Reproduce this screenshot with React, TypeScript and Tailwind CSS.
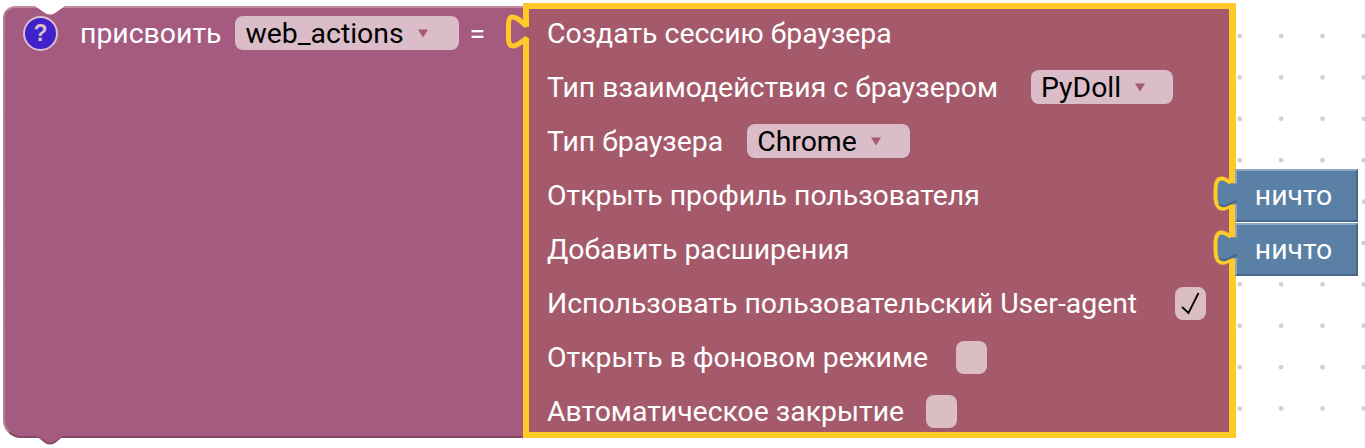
const font = "font-['Roboto',sans-serif]";

function Dropdown({ label, className }: { label: string; className: string }) {
  return (
    <div
      className={`flex h-[34px] items-center rounded-[8px] bg-[#dbbdc9] pl-[10px] text-[28.4px] text-black ${className}`}
    >
      <span className="pt-[2px]">{label}</span>
      <span className="ml-[13px] text-[#a55b6b]">
        <svg width="12" height="9" viewBox="0 0 12 9" className="block">
          <path d="M1 0.5h10L6 8.5z" fill="currentColor" />
        </svg>
      </span>
    </div>
  );
}

function Checkbox({ checked }: { checked?: boolean }) {
  return (
    <div className="flex h-[33px] w-[31px] items-center justify-center rounded-[8px] bg-[#dbbdc4]">
      {checked && (
        <svg width="20" height="24" viewBox="0 0 20 24">
          <path d="M1 16 7.5 22 17.5 2" fill="none" stroke="#000" strokeWidth="1.8" />
        </svg>
      )}
    </div>
  );
}

function Nothing() {
  return (
    <div className="relative -mr-[129px] flex h-[53px] w-[123px] items-center justify-center border-2 border-r-[#47678a] border-b-[#47678a] border-t-[#8ca6c0] border-l-[#8ca6c0] bg-[#5b80a5] pr-[6px] pt-[2px] text-[28.4px] text-white">
      <svg width="30" height="44" viewBox="0 0 30 44" className="absolute -left-[27px] top-[2px]">
        <path
          d="M21 10C17 7 14 5.5 11.5 5.5 7 5.5 5.5 10 5.5 17v6c0 5 1 9 3 11 2 2 4 2 6 1.5 3-.7 5-2 7-4L28 31V11z"
          fill="#5b80a5"
        />
        <path
          d="M21 10C17 7 14 5.5 11.5 5.5 7 5.5 5.5 10 5.5 17v6c0 5 1 9 3 11 2 2 4 2 6 1.5 3-.7 5-2 7-4"
          fill="none"
          stroke="#ffca28"
          strokeWidth="4"
        />
        <path d="M9 31c2 2 4 2.5 6 2 3-.8 6-3 12-5" fill="none" stroke="#47678a" strokeWidth="2" />
      </svg>
      ничто
    </div>
  );
}

function Row({ children }: { children: React.ReactNode }) {
  return <div className="flex h-[54px] items-center pl-[18px] text-[28.4px] text-white">{children}</div>;
}

function Label({ children, grow }: { children: React.ReactNode; grow?: boolean }) {
  return <span className={grow ? "flex-1 pt-[2px]" : "pt-[2px]"}>{children}</span>;
}

export default function App() {
  return (
    <div
      className={`${font} flex h-[448px] w-[1365px] items-start overflow-hidden bg-white bg-[radial-gradient(circle,#cfcfcf_2.2px,transparent_2.6px)] bg-[length:41.4px_41.4px] bg-[position:18.7px_15.3px] pl-[3px] pt-[3px]`}
    >
      {/* variable block */}
      <div className="relative z-0 mt-[3px] h-[432px] w-[521px] rounded-tl-[12px] rounded-bl-[18px] border-t-2 border-b-2 border-l-2 border-t-[#c08aa5] border-b-[#844966] border-l-[#b67c99] bg-[#a55b80]">
        <svg width="30" height="11" viewBox="0 0 30 11" className="absolute left-[30px] -top-[2px]">
          <path d="M0 0h30L20 7q-5 3-10 0z" fill="#fff" />
        </svg>
        <svg width="30" height="11" viewBox="0 0 30 11" className="absolute left-[30px] -bottom-[10px]">
          <path d="M0 0h30L20 8q-5 3-10 0z" fill="#844966" />
          <path d="M0 0h30L20 6q-5 3-10 0z" fill="#a55b80" />
        </svg>
        <div className="-mt-[2px] -ml-[2px] flex h-[54px] items-center pl-[20px] text-[28.4px] text-white">
          <div className="flex h-[35px] w-[35px] items-center justify-center rounded-full border-2 border-[#dbbdcc] bg-[#3f22cc] font-['Liberation_Sans',sans-serif] text-[23px] font-bold text-[#dbbdcc]">
            ?
          </div>
          <span className="ml-[22px] pt-[2px]">присвоить</span>
          <Dropdown label="web_actions" className="ml-[14px] w-[224px]" />
          <span className="ml-[10px] pt-[2px]">=</span>
        </div>
      </div>

      {/* browser session block */}
      <div className="relative z-10 -ml-[1px] h-[435px] w-[713px] border-t-[6px] border-r-[7px] border-b-[6px] border-l-[6px] border-[#ffca28] bg-[#a55a6b]">
        <svg width="32" height="46" viewBox="0 0 32 46" className="absolute -left-[29px] -top-[1px]">
          <rect x="23" y="19" width="6.5" height="11" fill="#a55a6b" />
          <path
            d="M25 17C21 13 17 9 12 9 9 9 8.5 13 8.5 18v12c0 5 1.500 8 4.500 8 4 0 8-4 12.500-7"
            fill="#a55b80"
            stroke="#ffca28"
            strokeWidth="5"
            strokeLinecap="round"
          />
        </svg>
        <div className="-mt-[3px]">
          <Row>
            <Label>Создать сессию браузера</Label>
          </Row>
          <Row>
            <Label>Тип взаимодействия с браузером</Label>
            <Dropdown label="PyDoll" className="ml-[33px] w-[142px]" />
          </Row>
          <Row>
            <Label>Тип браузера</Label>
            <Dropdown label="Chrome" className="ml-[24px] w-[163px]" />
          </Row>
          <Row>
            <Label grow>Открыть профиль пользователя</Label>
            <Nothing />
          </Row>
          <Row>
            <Label grow>Добавить расширения</Label>
            <Nothing />
          </Row>
          <Row>
            <Label>Использовать пользовательский User-agent</Label>
            <span className="ml-[38px]">
              <Checkbox checked />
            </span>
          </Row>
          <Row>
            <Label>Открыть в фоновом режиме</Label>
            <span className="ml-[28px]">
              <Checkbox />
            </span>
          </Row>
          <Row>
            <Label>Автоматическое закрытие</Label>
            <span className="ml-[22px]">
              <Checkbox />
            </span>
          </Row>
        </div>
      </div>
    </div>
  );
}
